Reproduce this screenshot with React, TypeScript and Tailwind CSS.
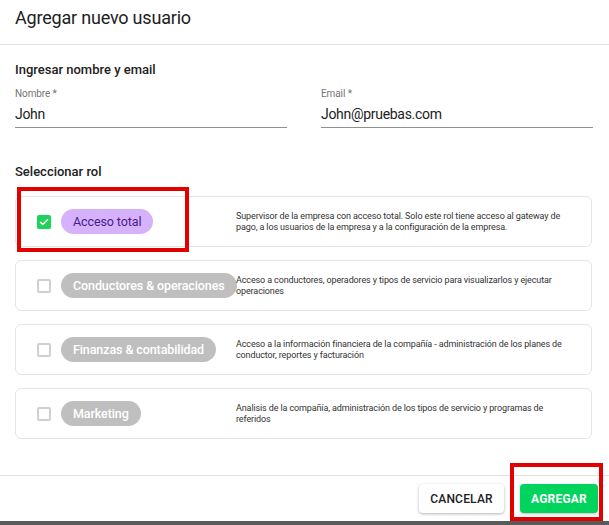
import React from 'react';

interface Role {
  id: string;
  name: string;
  description: string;
  checked?: boolean;
}

const roles: Role[] = [
  {
    id: 'admin',
    name: 'Acceso total',
    description:
      'Supervisor de la empresa con acceso total. Solo este rol tiene acceso al gateway de pago, a los usuarios de la empresa y a la configuración de la empresa.',
    checked: true,
  },
  {
    id: 'ops',
    name: 'Conductores & operaciones',
    description:
      'Acceso a conductores, operadores y tipos de servicio para visualizarlos y ejecutar operaciones',
  },
  {
    id: 'finance',
    name: 'Finanzas & contabilidad',
    description:
      'Acceso a la información financiera de la compañía - administración de los planes de conductor, reportes y facturación',
  },
  {
    id: 'marketing',
    name: 'Marketing',
    description:
      'Analisis de la compañía, administración de los tipos de servicio y programas de referidos',
  },
];

const Field: React.FC<{ label: string; value: string }> = ({ label, value }) => (
  <div className="flex flex-col">
    <label className="text-[10px] leading-[14px] tracking-[-0.1px] text-[#757575]">{label}</label>
    <div className="mt-[3px] border-b border-[#8f8f8f] pb-[3px] text-[14px] leading-[20px] tracking-[-0.3px] text-[#212121]">
      {value}
    </div>
  </div>
);

const Checkbox: React.FC<{ checked?: boolean }> = ({ checked }) =>
  checked ? (
    <div className="flex h-[14px] w-[14px] shrink-0 items-center justify-center rounded-[2px] bg-[#1ed35c]">
      <svg viewBox="0 0 24 24" className="h-[12px] w-[12px]" fill="none" stroke="white" strokeWidth={3.2} strokeLinecap="round" strokeLinejoin="round">
        <path d="M5 12.5l4.5 4.5L19 7.5" />
      </svg>
    </div>
  ) : (
    <div className="h-[14px] w-[14px] shrink-0 rounded-[2px] border-2 border-[#cfcfcf] bg-white" />
  );

const RoleCard: React.FC<{ role: Role }> = ({ role }) => (
  <div className="flex h-[51px] items-center rounded-[6px] border border-[#e5e5e5] bg-white pl-[21px] pr-[16px]">
    <Checkbox checked={role.checked} />
    <div className="ml-[10px] w-[175px] shrink-0">
      <span
        className={`inline-flex h-[25px] items-center whitespace-nowrap rounded-full px-[12px] text-[12.5px] tracking-[-0.1px] ${
          role.checked
            ? 'bg-[#d5b2fb] text-[#4a1a8c]'
            : 'bg-[#bfbfbf] font-medium text-white'
        }`}
      >
        {role.name}
      </span>
    </div>
    <p className="text-[9px] leading-[11px] tracking-[-0.12px] text-[#333333]">{role.description}</p>
  </div>
);

export default function App() {
  return (
    <div
      className="relative h-[525px] w-[609px] overflow-hidden bg-white"
      style={{ fontFamily: 'Roboto, "Liberation Sans", sans-serif' }}
    >
      {/* Header */}
      <div className="flex h-[45px] items-center border-b border-[#e0e0e0] px-[15px] pb-[8px]">
        <h1 className="text-[18px] leading-[26px] tracking-[-0.2px] text-[#212121]">Agregar nuevo usuario</h1>
      </div>

      {/* Name & email */}
      <div className="px-[15px] pt-[15px] pr-[16px]">
        <h2 className="text-[13px] font-medium leading-[20px] text-[#212121]">Ingresar nombre y email</h2>
        <div className="mt-[7px] grid grid-cols-2 gap-[34px]">
          <Field label="Nombre *" value="John" />
          <Field label="Email *" value="John@pruebas.com" />
        </div>

        {/* Roles */}
        <h2 className="mt-[34px] text-[13px] font-medium leading-[20px] text-[#212121]">Seleccionar rol</h2>
        <div className="mt-[14px] mr-[1px] flex flex-col gap-[13px]">
          {roles.map(role => (
            <RoleCard key={role.id} role={role} />
          ))}
        </div>
      </div>

      {/* Footer */}
      <div className="mt-[36px] flex h-[46px] items-start justify-end gap-[16px] border-t border-[#e0e0e0] pt-[8px] pr-[11px]">
        <button className="h-[29px] w-[85px] rounded-[4px] bg-white text-[12px] font-medium tracking-[0.2px] text-[#212121] shadow-[0_1px_3px_rgba(0,0,0,0.3)]">
          CANCELAR
        </button>
        <button className="h-[29px] w-[78px] rounded-[4px] bg-[#00d45c] text-[12px] font-bold tracking-[0.2px] text-white shadow-[0_1px_3px_rgba(0,0,0,0.25)]">
          AGREGAR
        </button>
      </div>

      {/* Bottom edge */}
      <div className="absolute bottom-0 left-0 h-[4px] w-full bg-[#5a5a5a]" />

      {/* Annotation boxes */}
      <div className="pointer-events-none absolute left-[17px] top-[187px] h-[65px] w-[172px] border-[4px] border-[#e30000]" />
      <div className="pointer-events-none absolute left-[510px] top-[463px] h-[58px] w-[93px] border-[4px] border-[#e30000]" />
    </div>
  );
}
